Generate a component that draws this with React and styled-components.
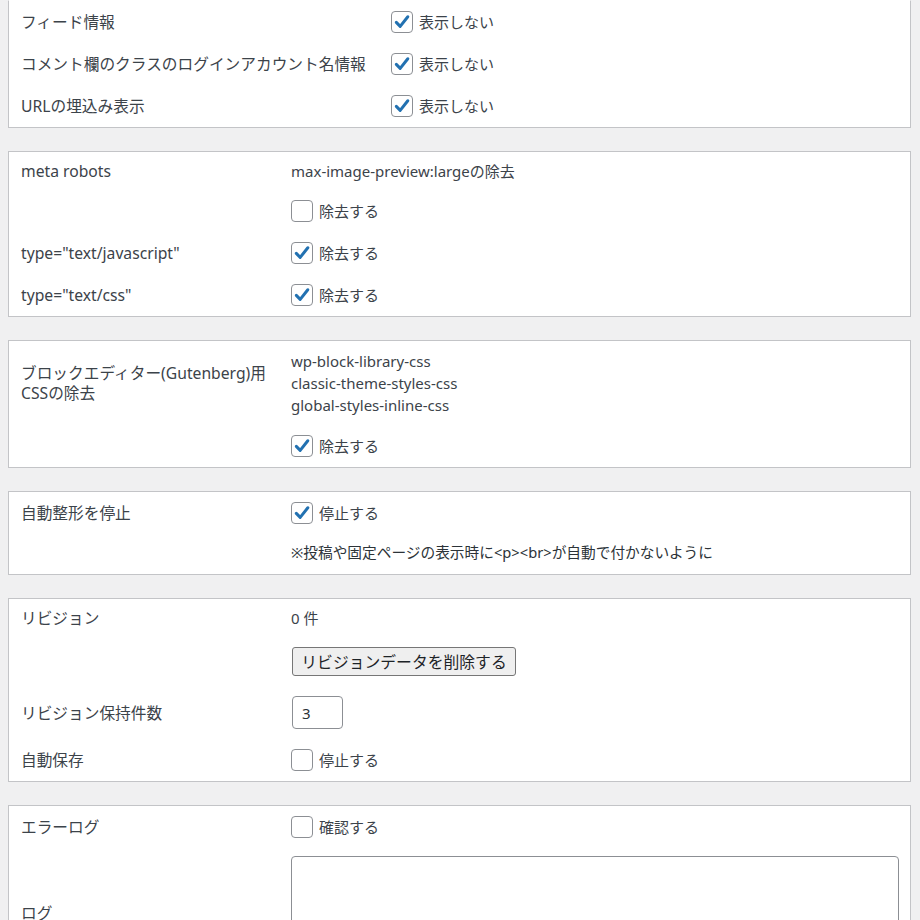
import React from "react";
import styled, { createGlobalStyle } from "styled-components";

const GlobalStyle = createGlobalStyle`
  body {
    margin: 0;
    background: #f0f0f1;
    font-family: "Noto Sans", "Noto Sans CJK JP", sans-serif;
    color: #3c434a;
  }
`;

const Page = styled.div`
  display: flex;
  flex-direction: column;
  gap: 23px;
  padding: 0 9px 0 8px;
`;

const Panel = styled.div`
  --label-w: ${({ $labelWidth }) => $labelWidth || 270}px;
  background: #fff;
  border: 1px solid #c3c4c7;
  border-top-color: ${({ $cut }) => ($cut ? "transparent" : "#c3c4c7")};
  padding: 0 11px 0 12px;
`;

const Row = styled.div`
  display: grid;
  grid-template-columns: var(--label-w) 1fr;
  align-items: center;
  padding: ${({ $pad }) => $pad || "10px 0"};
`;

const Label = styled.div`
  font-size: 15.7px;
  line-height: ${({ $lh }) => $lh || 18}px;
  color: #3c434a;
`;

const Value = styled.div`
  font-size: 15px;
  line-height: ${({ $lh }) => $lh || 18}px;
  color: #3c434a;
`;

const Note = styled.div`
  font-size: 14.7px;
  line-height: 18px;
  color: #2c3338;
`;

const CheckLabel = styled.label`
  display: inline-flex;
  align-items: center;
  gap: 6px;
  font-size: 15px;
  line-height: 20px;
  color: #3c434a;
`;

const Box = styled.span`
  width: 20px;
  height: 20px;
  border: 1px solid #8c8f94;
  border-radius: 4px;
  background: #fff;
  display: inline-flex;
  align-items: center;
  justify-content: center;
`;

const Button = styled.button`
  height: 29px;
  width: 224px;
  padding: 0;
  white-space: nowrap;
  font-family: "Noto Sans CJK JP", sans-serif;
  font-size: 15.8px;
  color: #1d2327;
  background: #efefef;
  border: 1px solid #767676;
  border-radius: 3px;
  margin-left: 1px;
`;

const NumberInput = styled.input`
  width: 51px;
  height: 33px;
  box-sizing: border-box;
  border: 1px solid #8c8f94;
  border-radius: 4px;
  padding: 0 9px;
  font-family: "Noto Sans", sans-serif;
  font-size: 15px;
  color: #2c3338;
  margin-left: 1px;
`;

const LogArea = styled.textarea`
  display: block;
  width: 100%;
  height: 114px;
  box-sizing: border-box;
  border: 1px solid #8c8f94;
  border-radius: 4px;
  resize: none;
`;

const Check = ({ checked, children }) => (
  <CheckLabel>
    <Box>
      {checked && (
        <svg width="18" height="18" viewBox="0 0 18 18">
          <path
            d="M3.3 9.4 L7.2 13.4 L14.8 3.8"
            fill="none"
            stroke="#2271b1"
            strokeWidth="3"
            strokeLinecap="round"
            strokeLinejoin="round"
          />
        </svg>
      )}
    </Box>
    {children}
  </CheckLabel>
);

export default function App() {
  return (
    <>
      <GlobalStyle />
      <Page>
        <Panel $cut $labelWidth={370}>
          <Row>
            <Label>フィード情報</Label>
            <Check checked>表示しない</Check>
          </Row>
          <Row>
            <Label>コメント欄のクラスのログインアカウント名情報</Label>
            <Check checked>表示しない</Check>
          </Row>
          <Row>
            <Label>URLの埋込み表示</Label>
            <Check checked>表示しない</Check>
          </Row>
        </Panel>

        <Panel>
          <Row>
            <Label>meta robots</Label>
            <Value>max-image-preview:largeの除去</Value>
          </Row>
          <Row>
            <Label />
            <Check>除去する</Check>
          </Row>
          <Row>
            <Label>type="text/javascript"</Label>
            <Check checked>除去する</Check>
          </Row>
          <Row>
            <Label>type="text/css"</Label>
            <Check checked>除去する</Check>
          </Row>
        </Panel>

        <Panel>
          <Row $pad="9px 0">
            <Label $lh={20}>
              ブロックエディター(Gutenberg)用
              <br />
              CSSの除去
            </Label>
            <Value $lh={22}>
              wp-block-library-css
              <br />
              classic-theme-styles-css
              <br />
              global-styles-inline-css
            </Value>
          </Row>
          <Row>
            <Label />
            <Check checked>除去する</Check>
          </Row>
        </Panel>

        <Panel>
          <Row>
            <Label>自動整形を停止</Label>
            <Check checked>停止する</Check>
          </Row>
          <Row $pad="9px 0 13px">
            <Label />
            <Note>※投稿や固定ページの表示時に&lt;p&gt;&lt;br&gt;が自動で付かないように</Note>
          </Row>
        </Panel>

        <Panel>
          <Row>
            <Label>リビジョン</Label>
            <Value>0 件</Value>
          </Row>
          <Row>
            <Label />
            <div>
              <Button type="button">リビジョンデータを削除する</Button>
            </div>
          </Row>
          <Row>
            <Label>リビジョン保持件数</Label>
            <div>
              <NumberInput type="text" defaultValue="3" />
            </div>
          </Row>
          <Row>
            <Label>自動保存</Label>
            <Check>停止する</Check>
          </Row>
        </Panel>

        <Panel>
          <Row>
            <Label>エラーログ</Label>
            <Check>確認する</Check>
          </Row>
          <Row $pad="8px 0 10px">
            <Label>ログ</Label>
            <LogArea />
          </Row>
        </Panel>
      </Page>
    </>
  );
}
